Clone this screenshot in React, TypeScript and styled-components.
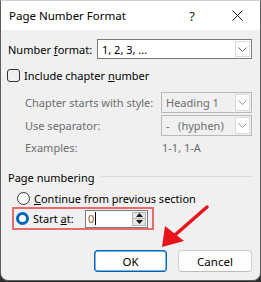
import React from "react";
import styled, { createGlobalStyle } from "styled-components";

const GlobalStyle = createGlobalStyle`
  html, body { margin: 0; padding: 0; background: #2e2e2e; }
  body { width: 261px; height: 282px; overflow: hidden; font-family: "Noto Sans", "Open Sans", sans-serif; }
  * { box-sizing: border-box; }
`;

const Window = styled.div`
  position: relative;
  width: 261px;
  height: 281px;
  border: 1px solid #5c5c5c;
  border-top-color: #cfcfcf;
  border-radius: 0 0 8px 8px;
  background: #f0f0f0;
  overflow: hidden;
  display: flex;
  flex-direction: column;
  font-size: 11px;
  color: #000;
`;

const TitleBar = styled.div`
  height: 29px;
  background: #ffffff;
  display: flex;
  align-items: center;
  padding-left: 8px;
  padding-right: 9px;
  font-size: 11.5px;
`;

const Title = styled.span`
  flex: 1;
`;

const TitleBtn = styled.span<{ $w: number; $ml?: number }>`
  width: ${(p) => p.$w}px;
  margin-left: ${(p) => p.$ml ?? 0}px;
  display: flex;
  align-items: center;
  justify-content: center;
  font-size: 13px;
  color: #1a1a1a;
`;

const Content = styled.div`
  display: flex;
  flex-direction: column;
  padding: 0 8px 0 7px;
  flex: 1;
`;

const Row = styled.div<{ $mt: number; $h: number; $pl?: number }>`
  display: flex;
  align-items: center;
  margin-top: ${(p) => p.$mt}px;
  height: ${(p) => p.$h}px;
  padding-left: ${(p) => p.$pl ?? 0}px;
`;

const Label = styled.span<{ $w?: number; $dim?: boolean }>`
  width: ${(p) => (p.$w ? `${p.$w}px` : "auto")};
  flex: none;
  color: ${(p) => (p.$dim ? "#6d6d6d" : "#000")};
  white-space: nowrap;
`;

const Select = styled.div<{ $w: number; $h: number; $disabled?: boolean }>`
  width: ${(p) => p.$w}px;
  height: ${(p) => p.$h}px;
  border: 1px solid ${(p) => (p.$disabled ? "#b9b9b9" : "#7a7a7a")};
  background: ${(p) => (p.$disabled ? "#f0f0f0" : "#ffffff")};
  color: ${(p) => (p.$disabled ? "#6d6d6d" : "#000")};
  display: flex;
  align-items: center;
  padding-left: 4px;
`;

const SelectValue = styled.span`
  flex: 1;
  white-space: pre;
`;

const ChevronBox = styled.span`
  width: 15px;
  align-self: stretch;
  margin: 1px;
  border: 1px solid #dadada;
  background: #ffffff;
  display: flex;
  align-items: center;
  justify-content: center;
`;

const Checkbox = styled.span`
  width: 13px;
  height: 13px;
  margin-left: -1px;
  margin-right: 4px;
  border: 1px solid #333;
  border-radius: 3px;
  flex: none;
`;

const Radio = styled.span<{ $on?: boolean }>`
  width: 13px;
  height: 13px;
  border-radius: 50%;
  flex: none;
  margin-right: 4px;
  border: ${(p) => (p.$on ? "3.5px solid #0067c0" : "1px solid #333")};
  background: #ffffff;
`;

const Separator = styled.span`
  flex: 1;
  height: 1px;
  background: #d9d9d9;
  margin-left: 7px;
  margin-top: -2px;
`;

const Highlight = styled.div`
  margin-top: 1px;
  margin-left: 4px;
  width: 142px;
  height: 23px;
  border: 2px solid #ea6b6b;
  display: flex;
  align-items: center;
  padding-left: 2px;
`;

const SpinInput = styled.div`
  width: 63px;
  height: 18px;
  border: 1px solid #7a7a7a;
  background: #fff;
  display: flex;
  align-items: center;
  padding-left: 2px;
`;

const SpinText = styled.span`
  flex: 1;
  display: flex;
  align-items: center;
  color: #9a5a10;
`;

const Caret = styled.span`
  width: 1px;
  height: 13px;
  background: #000;
  margin-left: 1px;
`;

const SpinButtons = styled.div`
  width: 14px;
  align-self: stretch;
  margin: 1px;
  display: flex;
  flex-direction: column;
  border: 1px solid #b4b4b4;
  background: #e6e6e6;
`;

const SpinHalf = styled.span<{ $down?: boolean }>`
  flex: 1;
  display: flex;
  align-items: center;
  justify-content: center;
  border-top: ${(p) => (p.$down ? "1px solid #b4b4b4" : "none")};
`;

const ButtonRow = styled.div`
  display: flex;
  justify-content: flex-end;
  gap: 11px;
  margin-top: 20px;
`;

const Button = styled.div<{ $primary?: boolean; $w: number }>`
  width: ${(p) => p.$w}px;
  height: 22px;
  border-radius: 4px;
  border: 1px solid ${(p) => (p.$primary ? "#0067c0" : "#d0d0d0")};
  border-bottom-color: ${(p) => (p.$primary ? "#0060b4" : "#bdbdbd")};
  box-shadow: ${(p) => (p.$primary ? "inset 0 0 0 0.5px #0067c0" : "none")};
  background: #fdfdfd;
  display: flex;
  align-items: center;
  justify-content: center;
  font-size: 11.5px;
`;

const Arrow = styled.svg`
  position: absolute;
  left: 154px;
  top: 200px;
  pointer-events: none;
`;

const Chevron = ({ dim }: { dim?: boolean }) => (
  <svg width="9" height="5" viewBox="0 0 9 5">
    <path d="M0.5 0.5 L4.5 4.5 L8.5 0.5" fill="none" stroke={dim ? "#9a9a9a" : "#606060"} strokeWidth="1" />
  </svg>
);

const Tri = ({ down }: { down?: boolean }) => (
  <svg width="7" height="4" viewBox="0 0 7 4">
    <path d={down ? "M0 0 L7 0 L3.5 4 Z" : "M0 4 L7 4 L3.5 0 Z"} fill="#1a1a1a" />
  </svg>
);

export default function App() {
  return (
    <>
      <GlobalStyle />
      <Window>
        <TitleBar>
          <Title>Page Number Format</Title>
          <TitleBtn $w={16}>?</TitleBtn>
          <TitleBtn $w={28} $ml={23}>
            <svg width="11" height="11" viewBox="0 0 11 11">
              <path d="M0.5 0.5 L10.5 10.5 M10.5 0.5 L0.5 10.5" stroke="#1a1a1a" strokeWidth="1" />
            </svg>
          </TitleBtn>
        </TitleBar>
        <Content>
          <Row $mt={9} $h={20}>
            <Label $w={89}>
              Number <u>f</u>ormat:
            </Label>
            <Select $w={155} $h={20}>
              <SelectValue>1, 2, 3, ...</SelectValue>
              <ChevronBox>
                <Chevron />
              </ChevronBox>
            </Select>
          </Row>
          <Row $mt={8} $h={16}>
            <Checkbox />
            <Label>
              Include chapter <u>n</u>umber
            </Label>
          </Row>
          <Row $mt={9} $h={21} $pl={17}>
            <Label $w={136} $dim>
              Chapter starts with style:
            </Label>
            <Select $w={92} $h={21} $disabled>
              <SelectValue>Heading 1</SelectValue>
              <ChevronBox>
                <Chevron dim />
              </ChevronBox>
            </Select>
          </Row>
          <Row $mt={2} $h={21} $pl={17}>
            <Label $w={136} $dim>
              Use separator:
            </Label>
            <Select $w={92} $h={21} $disabled>
              <SelectValue>{"-   (hyphen)"}</SelectValue>
              <ChevronBox>
                <Chevron dim />
              </ChevronBox>
            </Select>
          </Row>
          <Row $mt={3} $h={16} $pl={17}>
            <Label $w={137} $dim>
              Examples:
            </Label>
            <Label $dim>1-1, 1-A</Label>
          </Row>
          <Row $mt={14} $h={16}>
            <Label>Page numbering</Label>
            <Separator />
          </Row>
          <Row $mt={5} $h={16} $pl={9}>
            <Radio />
            <Label>
              <u>C</u>ontinue from previous section
            </Label>
          </Row>
          <Highlight>
            <Radio $on />
            <Label $w={52}>
              Start <u>a</u>t:
            </Label>
            <SpinInput>
              <SpinText>
                0<Caret />
              </SpinText>
              <SpinButtons>
                <SpinHalf>
                  <Tri />
                </SpinHalf>
                <SpinHalf $down>
                  <Tri down />
                </SpinHalf>
              </SpinButtons>
            </SpinInput>
          </Highlight>
          <ButtonRow>
            <Button $primary $w={73}>
              OK
            </Button>
            <Button $w={74}>Cancel</Button>
          </ButtonRow>
        </Content>
        <Arrow width="60" height="55" viewBox="0 0 60 55">
          <path d="M52 6 L20 34" stroke="#e8141c" strokeWidth="3.5" strokeLinecap="round" />
          <path d="M7 46 L10 25 L29 40 Z" fill="#e8141c" />
        </Arrow>
      </Window>
    </>
  );
}
